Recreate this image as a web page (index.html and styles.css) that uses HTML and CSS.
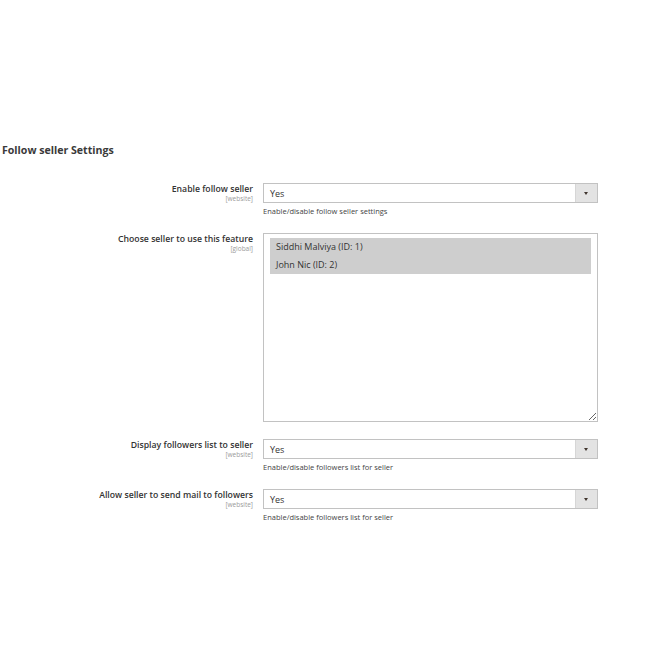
FILE: index.html
```html
<!DOCTYPE html>
<html>
<head>
<meta charset="utf-8">
<link rel="stylesheet" href="styles.css">
</head>
<body>
<div class="page">
  <h2 class="section-title">Follow seller Settings</h2>
  <div class="form">
    <div class="row">
      <div class="label"><span class="label-text">Enable follow seller</span><span class="scope">[website]</span></div>
      <div class="control">
        <div class="select"><span class="value">Yes</span><span class="arrow"></span></div>
        <div class="note">Enable/disable follow seller settings</div>
      </div>
    </div>
    <div class="row">
      <div class="label"><span class="label-text">Choose seller to use this feature</span><span class="scope">[global]</span></div>
      <div class="control">
        <div class="multiselect">
          <div class="option">Siddhi Malviya (ID: 1)</div>
          <div class="option">John Nic (ID: 2)</div>
        </div>
      </div>
    </div>
    <div class="row">
      <div class="label"><span class="label-text">Display followers list to seller</span><span class="scope">[website]</span></div>
      <div class="control">
        <div class="select"><span class="value">Yes</span><span class="arrow"></span></div>
        <div class="note">Enable/disable followers list for seller</div>
      </div>
    </div>
    <div class="row">
      <div class="label"><span class="label-text">Allow seller to send mail to followers</span><span class="scope">[website]</span></div>
      <div class="control">
        <div class="select"><span class="value">Yes</span><span class="arrow"></span></div>
        <div class="note">Enable/disable followers list for seller</div>
      </div>
    </div>
  </div>
</div>
</body>
</html>
```
FILE: styles.css
```css
html, body {
  margin: 0;
  padding: 0;
  background: #fff;
}
body {
  font-family: "Open Sans", "Noto Sans", sans-serif;
  color: #333;
}
.page {
  padding-top: 142px;
  padding-left: 2px;
}
.section-title {
  margin: 0 0 25px 0;
  font-size: 10.6px;
  font-weight: 700;
  line-height: 16px;
  color: #3a3a3a;
}
.form {
  display: flex;
  flex-direction: column;
  gap: 17px;
}
.row {
  display: grid;
  grid-template-columns: 251px 335px;
  column-gap: 10px;
}
.label {
  display: flex;
  flex-direction: column;
  align-items: flex-end;
  text-align: right;
}
.label-text {
  font-size: 8.7px;
  font-weight: 600;
  line-height: 12px;
  color: #333;
}
.scope {
  font-size: 6.5px;
  line-height: 8px;
  color: #9a9a9a;
}
.select {
  height: 20px;
  box-sizing: border-box;
  border: 1px solid #c2c2c2;
  display: flex;
  align-items: center;
  background: #fff;
}
.value {
  flex: 1;
  padding-left: 6px;
  font-size: 9px;
  color: #333;
}
.arrow {
  width: 21px;
  height: 100%;
  background: #e3e3e3;
  border-left: 1px solid #d6d6d6;
  position: relative;
}
.arrow::after {
  content: "";
  position: absolute;
  left: 8px;
  top: 8px;
  border-left: 2.5px solid transparent;
  border-right: 2.5px solid transparent;
  border-top: 3px solid #41362f;
}
.note {
  margin-top: 3px;
  font-size: 7.5px;
  line-height: 10px;
  color: #444;
}
.multiselect {
  height: 189px;
  box-sizing: border-box;
  border: 1px solid #c2c2c2;
  padding: 4px 6px;
  overflow: auto;
  resize: vertical;
}
.option {
  background: #cecece;
  font-size: 9px;
  line-height: 18px;
  padding-left: 6px;
  color: #333;
}
```
